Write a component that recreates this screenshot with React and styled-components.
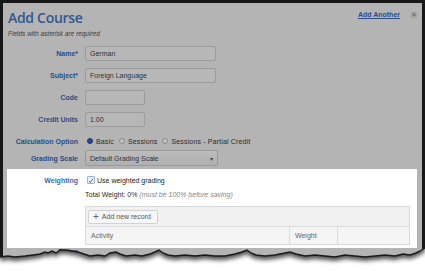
import React from 'react'
import styled, { createGlobalStyle } from 'styled-components'

// torn paper line along the bottom (absolute page coords)
const tear = [
  [0, 257], [8, 256], [15, 257], [25, 256], [33, 255], [40, 254], [45, 252], [48, 253],
  [52, 251], [56, 253], [60, 250], [66, 250], [72, 251], [78, 252], [84, 254], [90, 256],
  [98, 255], [105, 256], [110, 253], [116, 252], [120, 254], [126, 256], [135, 255],
  [142, 256], [150, 254], [155, 252], [159, 250], [163, 253], [168, 255], [175, 256],
  [185, 255], [195, 256], [205, 255], [215, 256], [225, 256], [235, 254], [242, 252],
  [247, 250], [251, 253], [256, 255], [265, 256], [275, 255], [285, 253], [290, 252],
  [296, 254], [305, 256], [315, 255], [325, 256], [335, 257], [345, 255], [355, 256],
  [365, 257], [375, 256], [385, 255], [395, 256], [403, 254], [410, 255], [416, 253],
  [420, 251], [425, 248],
]

const GlobalStyle = createGlobalStyle`
  html, body { margin: 0; padding: 0; background: #fff; }
  body { font-family: "Liberation Sans", Arial, sans-serif; }
`

function App() {
  const line = tear.map(([x, y]) => `${x},${y}`).join(' ')
  const below = `0,271 ${line} 425,271`
  const above = `0,230 ${line} 425,230`

  return (
    <Page>
      <GlobalStyle />
      <Dialog>
        <Header>
          <div>
            <Title>Add Course</Title>
            <Hint>Fields with asterisk are required</Hint>
          </div>
          <HeaderTools>
            <AddAnother>Add Another</AddAnother>
            <Close>×</Close>
          </HeaderTools>
        </Header>

        <Form>
          <Row>
            <Label>Name*</Label>
            <Input width={131}>German</Input>
          </Row>
          <Row>
            <Label>Subject*</Label>
            <Input width={131}>Foreign Language</Input>
          </Row>
          <Row>
            <Label>Code</Label>
            <Input width={60} />
          </Row>
          <Row>
            <Label>Credit Units</Label>
            <Input width={60}>1.00</Input>
          </Row>
          <Row>
            <Label>Calculation Option</Label>
            <Radios>
              <Radio checked />
              <Option>Basic</Option>
              <Radio />
              <Option>Sessions</Option>
              <Radio />
              <Option>Sessions - Partial Credit</Option>
            </Radios>
          </Row>
          <Row short>
            <Label>Grading Scale</Label>
            <Select>
              <span>Default Grading Scale</span>
              <Caret>▾</Caret>
            </Select>
          </Row>
        </Form>

        <Weighting>
          <Row tight>
            <Label light>Weighting</Label>
            <CheckLine>
              <Check>
                <svg width="8" height="8" viewBox="0 0 8 8">
                  <path d="M1.5 4 L3.1 6 L6.6 1.2" fill="none" stroke="#2f66b3" strokeWidth="1.2" />
                </svg>
              </Check>
              Use weighted grading
            </CheckLine>
          </Row>
          <Total>
            Total Weight: 0% <em>(must be 100% before saving)</em>
          </Total>
          <Grid>
            <Toolbar>
              <AddButton>
                <Plus>+</Plus>Add new record
              </AddButton>
            </Toolbar>
            <HeadRow>
              <HeadCell>Activity</HeadCell>
              <HeadCell width={48} ruled>Weight</HeadCell>
              <HeadCell width={72} ruled />
            </HeadRow>
          </Grid>
        </Weighting>

        <Row tight lifted>
          <Label>Notes</Label>
        </Row>
      </Dialog>

      <Tear width="425" height="31" viewBox="0 240 425 31">
        <defs>
          <clipPath id="below">
            <polygon points={below} />
          </clipPath>
          <filter id="soft" x="-5%" y="-50%" width="110%" height="200%">
            <feGaussianBlur stdDeviation="2.2" />
          </filter>
        </defs>
        <polygon points={below} fill="#fff" />
        <g clipPath="url(#below)">
          <polygon points={above} fill="#2a2a2a" opacity="0.8" filter="url(#soft)" transform="translate(0 4)" />
        </g>
        <polyline points={line} fill="none" stroke="#1a1a1a" strokeWidth="1.4" />
      </Tear>
    </Page>
  )
}

export default App

const Page = styled.div`
  position: relative;
  width: 425px;
  height: 271px;
  overflow: hidden;
  background: #fff;
`

const Dialog = styled.div`
  box-sizing: border-box;
  height: 271px;
  border: 3px solid #171717;
  border-bottom: 0;
  background: #b4b4b4;
  padding: 0 5px 0 4px;
  display: flex;
  flex-direction: column;
`

const Header = styled.div`
  display: flex;
  justify-content: space-between;
  align-items: flex-start;
  padding: 7px 0 0 1px;
`

const Title = styled.div`
  font-family: "Open Sans", "Liberation Sans", sans-serif;
  font-size: 14px;
  font-weight: 600;
  line-height: 16px;
  color: #30578f;
  letter-spacing: -0.3px;
`

const Hint = styled.div`
  margin-top: 3px;
  font-size: 6.5px;
  line-height: 9px;
  font-style: italic;
  color: #3c3c3c;
`

const HeaderTools = styled.div`
  display: flex;
  align-items: center;
  gap: 11px;
`

const AddAnother = styled.a`
  font-size: 7px;
  font-weight: bold;
  color: #2d4c8c;
  text-decoration: underline;
`

const Close = styled.span`
  width: 6px;
  height: 6px;
  background: #a4a4a4;
  color: #555;
  font-size: 7px;
  line-height: 6px;
  text-align: center;
  margin-top: 2px;
`

const Form = styled.div`
  margin-top: 4px;
  display: flex;
  flex-direction: column;
`

const Row = styled.div`
  display: flex;
  align-items: center;
  height: ${(p) => (p.short ? '16px' : p.tight ? '12px' : '22px')};
  margin-top: ${(p) => (p.short ? '-2px' : p.lifted ? '-3px' : '0')};
`

const Label = styled.div`
  flex: none;
  width: 71px;
  margin-right: 7px;
  text-align: right;
  font-size: 7px;
  font-weight: bold;
  color: ${(p) => (p.light ? '#3a6db3' : '#2a4d86')};
`

const Input = styled.div`
  box-sizing: border-box;
  width: ${(p) => p.width}px;
  height: 15px;
  border: 1px solid #9c9c9c;
  border-radius: 2px;
  background: #b7b7b7;
  padding: 0 4px;
  font-size: 7px;
  line-height: 13px;
  color: #333;
`

const Radios = styled.div`
  display: flex;
  align-items: center;
  font-size: 7px;
  color: #2a2a2a;
  padding-left: 2px;
`

const Radio = styled.span`
  box-sizing: border-box;
  width: 6px;
  height: 6px;
  border-radius: 50%;
  border: 1px solid ${(p) => (p.checked ? '#1f3c74' : '#8a8a8a')};
  background: ${(p) => (p.checked ? '#27498a' : '#c2c2c2')};
  margin-right: 3px;
`

const Option = styled.span`
  margin-right: 5px;
  letter-spacing: 0.15px;
`

const Select = styled.div`
  box-sizing: border-box;
  width: 133px;
  height: 16px;
  border: 1px solid #9a9a9a;
  border-radius: 2px;
  background: linear-gradient(#bcbcbc, #b0b0b0);
  padding: 0 4px;
  display: flex;
  align-items: center;
  justify-content: space-between;
  font-size: 7px;
  color: #333;
`

const Caret = styled.span`
  font-size: 6px;
  color: #444;
`

const Weighting = styled.div`
  margin-top: 3px;
  background: #fff;
  padding: 5px 7px 3px 0;
  display: flex;
  flex-direction: column;
`

const CheckLine = styled.div`
  display: flex;
  align-items: center;
  gap: 2px;
  font-size: 7px;
  color: #222;
  padding-left: 2px;
`

const Check = styled.span`
  box-sizing: border-box;
  width: 8px;
  height: 8px;
  border: 1px solid #9ab6da;
  border-radius: 1px;
  background: #e9f0f9;
  display: flex;
`

const Total = styled.div`
  margin: 4px 0 0 78px;
  font-size: 7px;
  line-height: 10px;
  color: #2a2a2a;

  em {
    color: #888;
  }
`

const Grid = styled.div`
  margin: 6px 0 0 78px;
  border: 1px solid #dadada;
`

const Toolbar = styled.div`
  height: 19px;
  background: #f1f1f1;
  border-bottom: 1px solid #dcdcdc;
  display: flex;
  align-items: center;
  padding-left: 2px;
`

const AddButton = styled.div`
  box-sizing: border-box;
  height: 14px;
  padding: 0 6px 0 4px;
  border: 1px solid #d2d2d2;
  border-radius: 2px;
  background: #f7f7f7;
  display: flex;
  align-items: center;
  gap: 3px;
  font-size: 7px;
  color: #555;
`

const Plus = styled.span`
  font-size: 10px;
  line-height: 10px;
  color: #666;
`

const HeadRow = styled.div`
  height: 17px;
  background: #f5f5f5;
  display: flex;
`

const HeadCell = styled.div`
  box-sizing: border-box;
  flex: ${(p) => (p.width ? `none` : '1')};
  width: ${(p) => (p.width ? `${p.width}px` : 'auto')};
  border-left: ${(p) => (p.ruled ? '1px solid #dcdcdc' : '0')};
  padding-left: 5px;
  font-size: 7px;
  line-height: 17px;
  color: #666;
`

const Tear = styled.svg`
  position: absolute;
  left: 0;
  top: 240px;
  display: block;
`
